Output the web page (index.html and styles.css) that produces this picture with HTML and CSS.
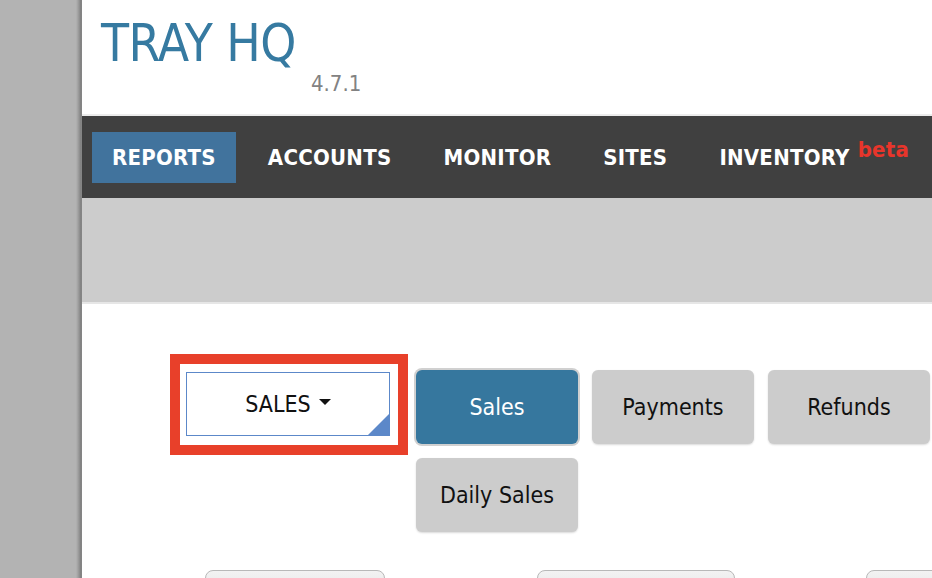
FILE: index.html
```html
<!DOCTYPE html>
<html>
<head>
<meta charset="utf-8">
<title>Tray HQ</title>
<link rel="stylesheet" href="styles.css">
</head>
<body>
<div class="page">
  <aside class="sidebar"></aside>
  <main class="main">
    <header class="header">
      <h1 class="title">TRAY HQ</h1>
      <span class="version">4.7.1</span>
    </header>
    <nav class="nav">
      <a class="nav-item active">REPORTS</a>
      <a class="nav-item">ACCOUNTS</a>
      <a class="nav-item">MONITOR</a>
      <a class="nav-item">SITES</a>
      <a class="nav-item">INVENTORY<sup class="beta">beta</sup></a>
    </nav>
    <div class="subbar"></div>
    <section class="content">
      <div class="report-row">
        <div class="highlight">
          <div class="select">SALES <span class="caret"></span></div>
        </div>
        <div class="btn-group">
          <button class="btn btn-active">Sales</button>
          <button class="btn">Payments</button>
          <button class="btn">Refunds</button>
          <button class="btn">Daily Sales</button>
        </div>
      </div>
      <div class="lower-row">
        <div class="ghost ghost-1"></div>
        <div class="ghost ghost-2"></div>
        <div class="ghost ghost-3"></div>
      </div>
    </section>
  </main>
</div>
</body>
</html>
```

FILE: styles.css
```css
html, body {
  margin: 0;
  padding: 0;
  overflow: hidden;
  background: #fff;
}
body {
  font-family: "DejaVu Sans Condensed", "DejaVu Sans", sans-serif;
  font-stretch: condensed;
}
.page {
  display: flex;
  width: 932px;
  height: 578px;
  overflow: hidden;
}
.sidebar {
  flex: 0 0 82px;
  background: linear-gradient(to right, #b3b3b3 0, #b3b3b3 76px, #a0a0a0 78px, #7e7e7e 81px, #8a8a8a 82px);
}
.main {
  flex: 1;
  min-width: 0;
  display: flex;
  flex-direction: column;
}
.header {
  flex-shrink: 0;
  height: 116px;
  box-sizing: border-box;
  padding: 16px 0 0 19px;
  border-bottom: 2px solid #ececec;
}
.title {
  margin: 0;
  font-size: 51px;
  line-height: 56px;
  font-weight: normal;
  color: #367aa1;
  letter-spacing: -0.5px;
}
.version {
  display: block;
  margin: 0 0 0 210px;
  font-size: 22px;
  line-height: 24px;
  color: #828282;
}
.nav {
  flex-shrink: 0;
  height: 82px;
  background: #404040;
  display: flex;
  align-items: center;
  padding-left: 10px;
  gap: 12px;
}
.nav-item {
  display: flex;
  align-items: center;
  height: 51px;
  padding: 0 20px;
  color: #fff;
  font-weight: bold;
  font-size: 22px;
  letter-spacing: 0.25px;
}
.nav-item.active {
  background: #41739d;
}
.beta {
  color: #e8352b;
  font-size: 22px;
  margin-left: 8px;
  position: relative;
  top: -8px;
}
.subbar {
  flex-shrink: 0;
  height: 104px;
  background: #cccccc;
  border-bottom: 2px solid #e6e6e6;
}
.content {
  flex: 1;
  padding: 50px 0 0 88px;
}
.report-row {
  display: flex;
  align-items: flex-start;
  gap: 8px;
}
.highlight {
  border: 10px solid #e8402a;
  padding: 8px 8px 9px 6px;
  background: #fff;
}
.select {
  position: relative;
  width: 202px;
  height: 62px;
  border: 1px solid #5c88c9;
  display: flex;
  align-items: center;
  justify-content: center;
  font-size: 23px;
  color: #111;
}
.select::after {
  content: "";
  position: absolute;
  right: 0;
  bottom: 0;
  width: 21px;
  height: 21px;
  background: #5c88c9;
  clip-path: polygon(100% 0, 100% 100%, 0 100%);
}
.caret {
  display: inline-block;
  width: 0;
  height: 0;
  border-left: 6px solid transparent;
  border-right: 6px solid transparent;
  border-top: 6px solid #111;
  margin-left: 8px;
  position: relative;
  top: -2px;
}
.btn-group {
  margin-top: 16px;
  width: 516px;
  display: flex;
  flex-wrap: wrap;
  gap: 14px 14px;
}
.btn {
  width: 162px;
  height: 74px;
  border: 0;
  border-radius: 6px;
  background: #cccccc;
  color: #111;
  font-family: "DejaVu Sans Condensed", "DejaVu Sans", sans-serif;
  font-stretch: condensed;
  font-size: 23px;
  box-shadow: 0 1px 2px rgba(0, 0, 0, 0.15);
  padding: 0;
}
.btn-active {
  background: #36779e;
  color: #fff;
  box-shadow: 0 0 0 2px #d0d0d0;
}
.lower-row {
  display: flex;
  margin: 38px 0 0 35px;
}
.ghost {
  height: 40px;
  border: 1px solid #b8b8b8;
  border-radius: 8px;
  background: linear-gradient(#f2f2f2, #e0e0e0);
  flex-shrink: 0;
}
.ghost-1 { width: 178px; }
.ghost-2 { width: 196px; margin-left: 152px; }
.ghost-3 { width: 120px; margin-left: 131px; }
```
